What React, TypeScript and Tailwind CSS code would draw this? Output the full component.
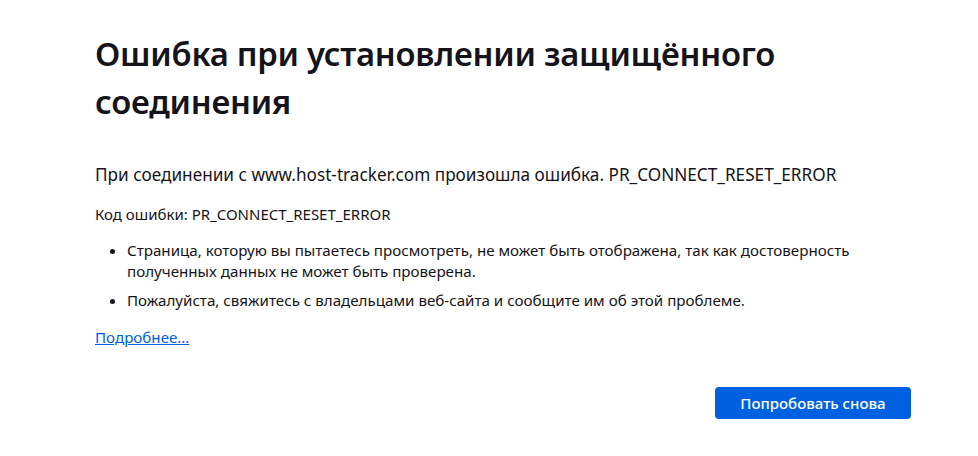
export default function App() {
  return (
    <div
      className="min-h-screen bg-white text-[#15141a]"
      style={{ fontFamily: '"Noto Sans", "Open Sans", sans-serif' }}
    >
      <div className="pl-[95px] pt-[30px] w-[911px]">
        {/* ── Title ─────────────────────────────────────────────── */}
        <h1 className="text-[32.8px] leading-[48px] font-semibold tracking-[-0.25px]">
          Ошибка при установлении защищённого соединения
        </h1>

        {/* ── Description ───────────────────────────────────────── */}
        <p className="mt-[36px] text-[17.2px] leading-[26px]">
          При соединении с www.host-tracker.com произошла ошибка. PR_CONNECT_RESET_ERROR
        </p>

        <p className="mt-[16px] text-[15px] leading-[21px]">
          Код ошибки: PR_CONNECT_RESET_ERROR
        </p>

        <ul className="mt-[15px] pl-[32px] list-disc text-[15.15px] leading-[21px]">
          <li className="mb-[8px]">
            Страница, которую вы пытаетесь просмотреть, не может быть отображена, так как
            достоверность полученных данных не может быть проверена.
          </li>
          <li>Пожалуйста, свяжитесь с владельцами веб-сайта и сообщите им об этой проблеме.</li>
        </ul>

        <a href="#" className="block mt-[16px] text-[15.15px] leading-[21px] text-[#0061e0] underline w-max">
          Подробнее…
        </a>

        {/* ── Action ────────────────────────────────────────────── */}
        <div className="mt-[39px] flex justify-end">
          <button className="w-[196px] h-[32px] rounded-[4px] bg-[#0061e0] text-white text-[15px] font-medium">
            Попробовать снова
          </button>
        </div>
      </div>
    </div>
  );
}
